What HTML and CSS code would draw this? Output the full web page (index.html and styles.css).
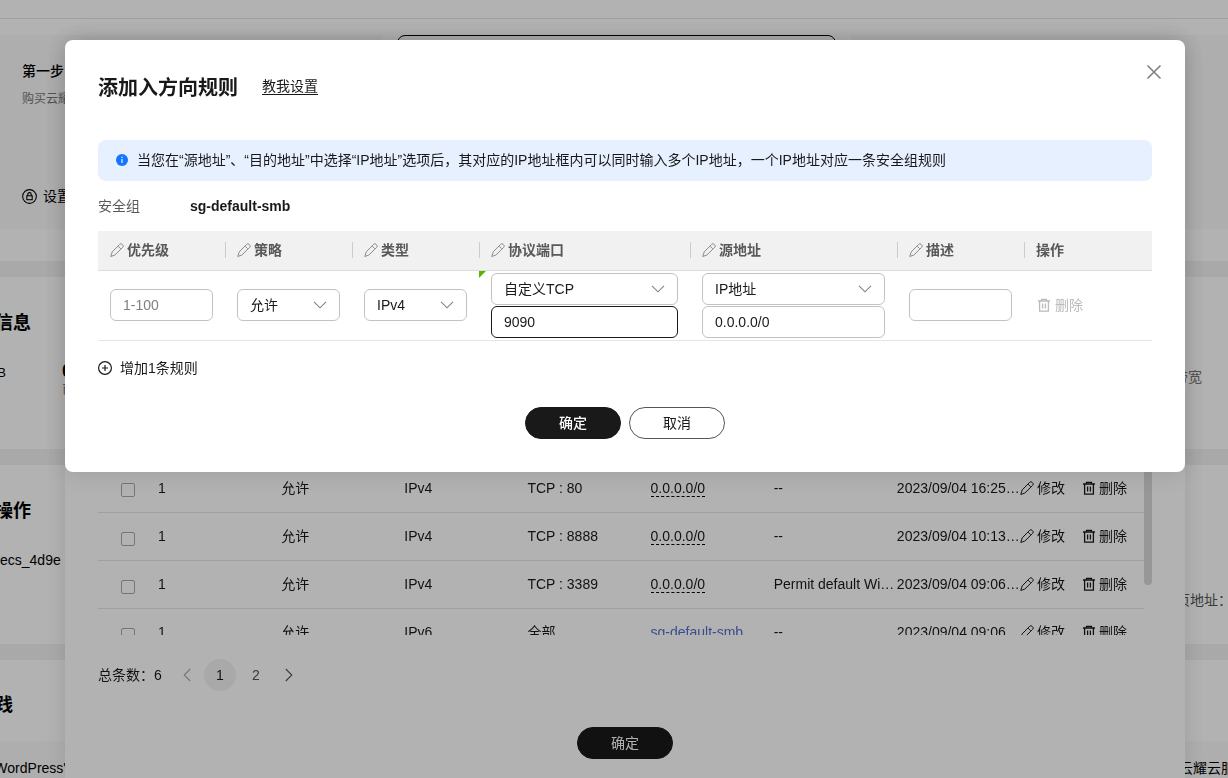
FILE: index.html
```
<!DOCTYPE html>
<html lang="zh-CN">
<head>
<meta charset="utf-8">
<title>添加入方向规则</title>
<link rel="stylesheet" href="styles.css">
</head>
<body>
<svg class="sprite" aria-hidden="true">
  <symbol id="pencil" viewBox="0 0 14 14"><path d="M.9 13.1 2.2 8.9 9.6 1.4a1.7 1.7 0 0 1 2.6 0l.4.4a1.7 1.7 0 0 1 0 2.6L5.1 11.8ZM8.6 3.6l1.8 1.8" fill="none" stroke="currentColor" stroke-linejoin="round" stroke-linecap="round"/></symbol>
  <symbol id="trash" viewBox="0 0 14 14"><path d="M1 3h12M4.5 2.8V1.4h5v1.4M2.6 3.2v9.9h8.8V3.2M5.6 5.5v5M8.4 5.5v5" fill="none" stroke="currentColor" stroke-width="1.3"/></symbol>
  <symbol id="chevron" viewBox="0 0 14 14"><path d="m1 3.8 6 6 6-6" fill="none" stroke="currentColor" stroke-width="1.1"/></symbol>
</svg>

<main class="page">
  <header class="topbar"></header>
  <section class="steps">
    <article class="step">
      <h2 class="step-title">第一步</h2>
      <p class="step-desc">购买云耀</p>
      <a class="step-link" href="#"><svg class="lock" viewBox="0 0 14 14" aria-hidden="true"><g fill="none" stroke="currentColor"><circle cx="7" cy="7" r="6.4"/><rect x="4.5" y="6.3" width="5" height="3.7"/><path d="M5.4 6.3V5a1.6 1.6 0 0 1 3.2 0v1.3"/></g></svg>设置</a>
    </article>
    <article class="step step-active"></article>
    <article class="step"></article>
  </section>
  <section class="card card-info">
    <h2 class="card-title"><span>信息</span></h2>
    <div class="info-row">
      <span class="mem">B</span>
      <span class="usage"><b>0</b><small>已</small></span>
      <span class="bandwidth">带宽</span>
    </div>
  </section>
  <section class="card card-ops">
    <h2 class="card-title"><span>操作</span></h2>
    <p class="server">ecs_4d9e</p>
    <p class="address">页地址：</p>
  </section>
  <section class="card card-practice">
    <h2 class="card-title card-title-short"><span>践</span></h2>
    <div class="practice-row"><span class="wordpress"><span>WordPress'</span></span><span>云耀云服</span></div>
  </section>
</main>

<div class="layer">
  <section class="panel">
    <div class="scroll-area">
      <div class="rules-wrap">
      <table class="rules">
        <colgroup><col class="col-check"><col><col><col><col><col><col><col><col class="col-ops"></colgroup>
        <tbody>
          <tr><td class="check"><input type="checkbox" aria-label="选择"></td><td>1</td><td>允许</td><td>IPv4</td><td>TCP : 80</td><td><span class="source">0.0.0.0/0</span></td><td>--</td><td>2023/09/04 16:25…</td><td><div class="ops"><button class="op" type="button"><svg class="icon"><use href="#pencil"/></svg>修改</button><button class="op" type="button"><svg class="icon"><use href="#trash"/></svg>删除</button></div></td></tr>
          <tr><td class="check"><input type="checkbox" aria-label="选择"></td><td>1</td><td>允许</td><td>IPv4</td><td>TCP : 8888</td><td><span class="source">0.0.0.0/0</span></td><td>--</td><td>2023/09/04 10:13…</td><td><div class="ops"><button class="op" type="button"><svg class="icon"><use href="#pencil"/></svg>修改</button><button class="op" type="button"><svg class="icon"><use href="#trash"/></svg>删除</button></div></td></tr>
          <tr><td class="check"><input type="checkbox" aria-label="选择"></td><td>1</td><td>允许</td><td>IPv4</td><td>TCP : 3389</td><td><span class="source">0.0.0.0/0</span></td><td>Permit default Wi…</td><td>2023/09/04 09:06…</td><td><div class="ops"><button class="op" type="button"><svg class="icon"><use href="#pencil"/></svg>修改</button><button class="op" type="button"><svg class="icon"><use href="#trash"/></svg>删除</button></div></td></tr>
          <tr><td class="check"><input type="checkbox" aria-label="选择"></td><td>1</td><td>允许</td><td>IPv6</td><td>全部</td><td><a class="group-link" href="#">sg-default-smb</a></td><td>--</td><td>2023/09/04 09:06…</td><td><div class="ops"><button class="op" type="button"><svg class="icon"><use href="#pencil"/></svg>修改</button><button class="op" type="button"><svg class="icon"><use href="#trash"/></svg>删除</button></div></td></tr>
        </tbody>
      </table>
      </div>
      <div class="scroll-thumb"></div>
    </div>
    <nav class="pager" aria-label="分页">
      <span>总条数：6</span>
      <button class="page-btn page-prev" type="button" aria-label="上一页"><svg class="icon"><use href="#chevron"/></svg></button>
      <button class="page-btn page-current" type="button">1</button>
      <button class="page-btn" type="button">2</button>
      <button class="page-btn page-next" type="button" aria-label="下一页"><svg class="icon"><use href="#chevron"/></svg></button>
    </nav>
    <div class="actions"><button class="btn btn-primary" type="button">确定</button></div>
  </section>
</div>

<div class="layer mask">
  <section class="dialog" role="dialog" aria-labelledby="dialog-title">
    <button class="close" type="button" aria-label="关闭"><svg viewBox="0 0 16 16" aria-hidden="true"><path d="m1.5 1.5 13 13m0-13-13 13" stroke="currentColor" stroke-width="1.6"/></svg></button>
    <header class="dialog-head">
      <h1 class="dialog-title" id="dialog-title">添加入方向规则</h1>
      <a class="help" href="#">教我设置</a>
    </header>
    <div class="notice">
      <svg class="info" viewBox="0 0 12 12" aria-hidden="true"><circle cx="6" cy="6" r="6" fill="#1476ff"/><path d="M6 5v4M6 2.8v1.2" stroke="#fff" stroke-width="1.1"/></svg>
      <span>当您在“源地址”、“目的地址”中选择“IP地址”选项后，其对应的IP地址框内可以同时输入多个IP地址，一个IP地址对应一条安全组规则</span>
    </div>
    <div class="group"><span class="group-label">安全组</span><strong>sg-default-smb</strong></div>
    <table class="editor">
      <colgroup><col class="w-std"><col class="w-std"><col class="w-std"><col class="w-port"><col class="w-src"><col class="w-std"><col class="w-last"></colgroup>
      <thead>
        <tr>
          <th><span class="head"><svg class="icon"><use href="#pencil"/></svg>优先级</span></th>
          <th><span class="head"><svg class="icon"><use href="#pencil"/></svg>策略</span></th>
          <th><span class="head"><svg class="icon"><use href="#pencil"/></svg>类型</span></th>
          <th><span class="head"><svg class="icon"><use href="#pencil"/></svg>协议端口</span></th>
          <th><span class="head"><svg class="icon"><use href="#pencil"/></svg>源地址</span></th>
          <th><span class="head"><svg class="icon"><use href="#pencil"/></svg>描述</span></th>
          <th><span class="head">操作</span></th>
        </tr>
      </thead>
      <tbody>
        <tr>
          <td><input class="field" type="text" placeholder="1-100" aria-label="优先级"></td>
          <td><div class="select"><select class="field" aria-label="策略"><option>允许</option></select><svg class="icon"><use href="#chevron"/></svg></div></td>
          <td><div class="select"><select class="field" aria-label="类型"><option>IPv4</option></select><svg class="icon"><use href="#chevron"/></svg></div></td>
          <td class="changed"><div class="stack"><div class="select"><select class="field" aria-label="协议"><option>自定义TCP</option></select><svg class="icon"><use href="#chevron"/></svg></div><input class="field field-active" type="text" value="9090" aria-label="端口"></div></td>
          <td><div class="stack"><div class="select"><select class="field" aria-label="源地址类型"><option>IP地址</option></select><svg class="icon"><use href="#chevron"/></svg></div><input class="field" type="text" value="0.0.0.0/0" aria-label="源地址"></div></td>
          <td><input class="field" type="text" aria-label="描述"></td>
          <td><button class="op op-disabled" type="button" disabled><svg class="icon"><use href="#trash"/></svg>删除</button></td>
        </tr>
      </tbody>
    </table>
    <button class="add" type="button"><svg class="icon" viewBox="0 0 14 14" aria-hidden="true"><g fill="none" stroke="currentColor" stroke-width="1.2"><circle cx="7" cy="7" r="6.4"/><path d="M7 4v6M4 7h6"/></g></svg>增加1条规则</button>
    <div class="actions"><button class="btn btn-primary btn-strong" type="button">确定</button><button class="btn" type="button">取消</button></div>
  </section>
</div>
</body>
</html>
```

FILE: styles.css
```
* { box-sizing: border-box; }
body {
  margin: 0;
  height: 100vh;
  overflow: hidden;
  background: #fff;
  color: #191919;
  font: 14px/20px "Liberation Sans", "Noto Sans CJK SC", sans-serif;
}
h1, h2, p { margin: 0; }
button, input, select { font: inherit; color: inherit; }
button { padding: 0; border: 0; background: none; }
a { color: inherit; }
table { width: 100%; border-collapse: collapse; table-layout: fixed; }
.sprite { display: none; }
.icon { width: 14px; height: 14px; flex: none; }

/* Page underneath */
.page { height: 100%; overflow: hidden; background: #f2f2f2; color: #000; white-space: nowrap; }
.topbar { height: 19px; border-bottom: 1px solid #e4e4e4; background: #fff; }
.steps { display: grid; grid-template-columns: 382fr 439fr 377fr; gap: 15px; padding: 16px 0 32px; background: #fff; }
.step { height: 194px; background: #f9f9f9; padding: 26px 22px; }
.step-active { border: 1px solid #000; border-radius: 8px; }
.step-title { font-size: 14px; line-height: 20px; font-weight: 500; }
.step-desc { margin-top: 8px; font-size: 12px; line-height: 20px; color: #777; }
.step-link { display: flex; align-items: center; gap: 6px; margin-top: 77px; text-decoration: none; }
.lock { width: 15px; height: 15px; }
.card { background: #fff; margin-top: 16px; overflow: hidden; }
.card-info { height: 172px; padding-top: 34px; }
.card-ops { height: 179px; padding-top: 34px; }
.card-practice { height: 172px; padding-top: 33px; }
.card-title { display: flex; justify-content: flex-end; width: 31px; font-size: 18px; line-height: 24px; font-weight: 700; }
.card-title-short { width: 13px; }
.info-row { display: flex; height: 52px; margin-top: 27px; }
.mem { width: 6px; display: flex; justify-content: flex-end; padding-top: 1px; font-size: 13px; }
.usage { display: flex; flex-direction: column; margin-left: 56px; }
.usage b { font-size: 18px; line-height: 18px; }
.usage small { font-size: 12px; line-height: 20px; color: #667; }
.bandwidth { margin-left: auto; padding: 5px 26px 0 0; color: #777; }
.server { margin-top: 27px; }
.address { margin: 20px -4px 0 0; text-align: right; color: #555; }
.practice-row { display: flex; justify-content: space-between; margin-top: 24px; padding-top: 17px; background: #fafafa; height: 90px; }
.practice-row > span:last-child { width: 49px; overflow: hidden; }
.wordpress { width: 66px; display: flex; justify-content: flex-end; }

/* Stacked overlays */
.layer { position: fixed; inset: 0; padding: 40px 43px 0 65px; overflow: hidden; }
.mask { background: rgba(0, 0, 0, .3); }
.panel, .dialog { background: #fff; border-radius: 8px; box-shadow: 0 0 24px rgba(0, 0, 0, .12); }
.panel { height: 100%; border-radius: 8px 8px 0 0; padding: 0 33px 19px; display: flex; flex-direction: column; justify-content: flex-end; }
.scroll-area { display: flex; align-items: flex-start; height: 171px; overflow: hidden; }
.rules-wrap { flex: 1; min-width: 0; }
.col-check { width: 60px; }
.col-ops { width: 124px; }
.rules td { height: 48px; padding: 0; border-bottom: 1px solid #e4e4e4; white-space: nowrap; }
.rules .check { padding: 5px 0 0 23px; line-height: 14px; }
.check input { appearance: none; display: block; width: 14px; height: 14px; margin: 0; border: 1px solid #aaa; border-radius: 2px; }
.source { border-bottom: 1px dashed #000; }
.group-link { color: #526ecc; text-decoration: none; }
.ops { display: flex; gap: 17px; }
.op { display: flex; align-items: center; gap: 3px; }
.op-disabled { color: #bbb; gap: 4px; padding-left: 1px; }
.scroll-thumb { width: 8px; height: 121px; border-radius: 0 0 4px 4px; background: #d8d8d8; }
.pager { display: flex; align-items: center; height: 32px; margin: 24px 0 36px; }
.page-btn { display: flex; align-items: center; justify-content: center; width: 32px; height: 32px; margin-right: 4px; border-radius: 16px; color: #555; }
.page-current { background: #f2f2f2; color: #191919; font-weight: 500; }
.page-prev { width: 26px; margin: 0 4px 0 12px; color: #aaa; }
.page-prev .icon { transform: rotate(90deg); }
.page-next { width: 26px; margin: 0; }
.page-next .icon { transform: rotate(-90deg); }
.actions { display: flex; justify-content: center; gap: 8px; }
.btn { width: 96px; height: 32px; border: 1px solid #555; border-radius: 16px; }
.btn-primary { border-color: #191919; background: #191919; color: #fff; }
.btn-strong { font-weight: 500; }

/* Add-rule dialog */
.dialog { position: relative; padding: 33px; }
.close { position: absolute; top: 24px; right: 23px; width: 16px; height: 16px; color: #808080; }
.close svg { display: block; }
.dialog-head { display: flex; align-items: flex-start; gap: 24px; height: 28px; }
.dialog-title { font-size: 20px; line-height: 30px; font-weight: 700; }
.help { margin-top: 5px; line-height: 16px; text-decoration: none; border-bottom: 1px solid #191919; }
.notice { display: flex; align-items: center; gap: 9px; min-height: 41px; margin-top: 39px; padding: 0 18px 2px; border-radius: 8px; background: #e6f0ff; }
.info { width: 12px; height: 12px; flex: none; }
.group { display: flex; margin: 15px 0; }
.group-label { width: 92px; color: #595959; }
.w-std { width: 127px; }
.w-port { width: 211px; }
.w-src { width: 207px; }
.w-last { width: 128px; }
.editor th { height: 39px; padding: 0; background: #f1f1f1; border-bottom: 1px solid #ddd; color: #595959; text-align: left; font-weight: 700; }
.editor th + th .head { border-left: 1px solid #ccc; padding-left: 11px; }
.head { display: flex; align-items: center; gap: 3px; height: 16px; padding-left: 12px; }
.head .icon { color: #8a8a8a; }
.editor td { height: 70px; padding: 2px 12px; border-bottom: 1px solid #e6e6e6; }
.field { display: block; width: 100%; height: 32px; padding: 0 12px; border: 1px solid #c2c2c2; border-radius: 6px; background: #fff; outline: 0; appearance: none; }
.field::placeholder { color: #808080; }
.field-active { border-color: #191919; }
.select { position: relative; }
.select .icon { position: absolute; right: 13px; top: 9px; color: #808080; pointer-events: none; }
.stack { display: grid; gap: 1px; }
.changed { position: relative; }
.changed::before { content: ""; position: absolute; left: 0; top: 0; border-top: 7px solid #5cb300; border-right: 7px solid transparent; }
.add { display: flex; align-items: center; gap: 8px; margin: 17px 0 29px; }
```
